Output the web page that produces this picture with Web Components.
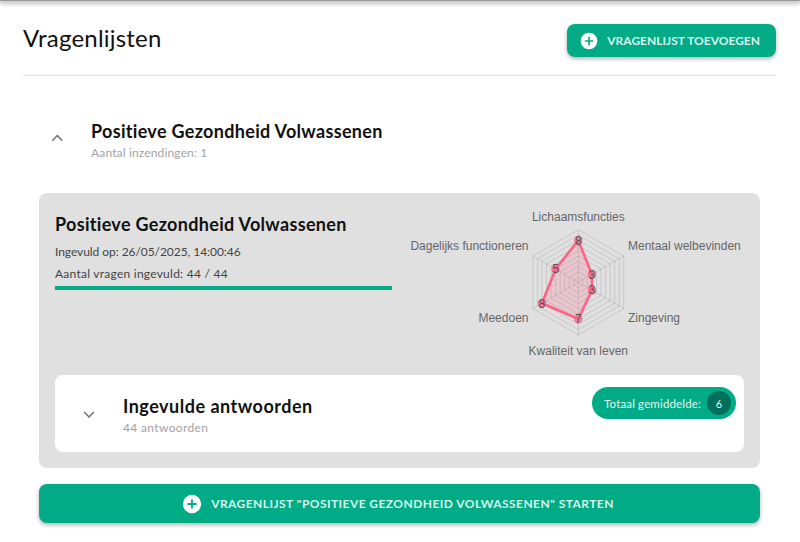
<!DOCTYPE html>
<html lang="nl"><head><meta charset="utf-8"><title>Vragenlijsten</title>
<style>
html,body{margin:0;padding:0;background:#fff;height:542px;overflow:hidden}
body{font-family:Lato,"Noto Sans",sans-serif;color:#000}
</style></head><body>
<template id="t-plus"><svg width="100%" height="100%" viewBox="0 0 24 24"><path fill="#fff" d="M12 2a10 10 0 1 0 0 20 10 10 0 0 0 0-20zm5 11h-4v4h-2v-4H7v-2h4V7h2v4h4v2z"/></svg></template>
<vl-app>
  <vl-header title-text="Vragenlijsten"><vl-button>VRAGENLIJST TOEVOEGEN</vl-button></vl-header>
  <vl-expander heading="Positieve Gezondheid Volwassenen" sub="Aantal inzendingen: 1" open></vl-expander>
  <vl-result heading="Positieve Gezondheid Volwassenen" date="Ingevuld op: 26/05/2025, 14:00:46" count="Aantal vragen ingevuld: 44 / 44">
    <vl-radar slot="chart"></vl-radar>
    <vl-answers slot="answers"></vl-answers>
  </vl-result>
  <vl-button block>VRAGENLIJST "POSITIEVE GEZONDHEID VOLWASSENEN" STARTEN</vl-button>
</vl-app>
<script>
const mk=(name,html,fn)=>customElements.define(name,class extends HTMLElement{
  connectedCallback(){ if(this.shadowRoot) return; const s=this.attachShadow({mode:'open'}); s.innerHTML=typeof html==='function'?html(this):html; fn&&fn(s,this);} });
const plus=()=>document.getElementById('t-plus').innerHTML;
const chev=d=>`<svg width="24" height="24" viewBox="0 0 24 24"><path fill="none" stroke="#6f6f6f" stroke-width="1.5" d="${d?'M7.1 9 12 14 16.9 9':'M7.3 14.7 12.3 9.5 17.3 14.7'}"/></svg>`;

mk('vl-app',`<style>:host{display:block;height:542px;box-sizing:border-box;position:relative}
.bar{height:1px;background:#999;box-shadow:0 1px 5px 1px rgba(0,0,0,.42)}
.wrap{padding:23px 24px 0 23px}</style><div class="bar"></div><div class="wrap"><slot></slot></div>`);

mk('vl-header',h=>`<style>:host{display:flex;justify-content:space-between;align-items:flex-start;height:51px;border-bottom:1px solid #e0e0e0;margin-bottom:0}
h1{margin:0;font-weight:400;font-size:24px;line-height:28px;color:#111;letter-spacing:.2px}</style>
<h1>${h.getAttribute('title-text')}</h1><slot></slot>`);

mk('vl-button',h=>{const b=h.hasAttribute('block');return `<style>:host{display:${b?'flex':'inline-flex'};align-items:center;justify-content:center;gap:8px;box-sizing:border-box;
height:${b?39:33}px;padding:${b?'0 18px 0 14px':'0 16px 0 12px'};background:#00ab86;color:#d9f5ee;border-radius:8px;font-size:12px;font-weight:700;letter-spacing:${b?'.44px':'0'};white-space:nowrap;
box-shadow:0 2px 4px rgba(0,0,0,.3)}
${b?':host{margin-left:16px;margin-right:16px}':''}
.i{width:${b?22:20}px;height:${b?22:20}px;display:block}</style><span class="i">${plus()}</span><span><slot></slot></span>`});

mk('vl-expander',h=>`<style>:host{display:flex;align-items:flex-start;height:117px;box-sizing:border-box;padding:44px 0 0 22px}
.c{width:24px;height:24px;margin-top:6px;margin-right:22px}
h2{margin:0;font-size:18px;line-height:22px;font-weight:700;color:#111;letter-spacing:.31px}
p{margin:3px 0 0;font-size:12px;line-height:16px;color:#a3a3a3;letter-spacing:.15px}</style>
<span class="c">${chev(false)}</span><div><h2>${h.getAttribute('heading')}</h2><p>${h.getAttribute('sub')}</p></div>`);

mk('vl-result',h=>`<style>:host{display:block;box-sizing:border-box;margin:0 16px 16px;background:#e0e0e0;border-radius:8px;padding:16px;height:275px}
.top{display:grid;grid-template-columns:337px 1fr;gap:15px;height:166px}
h3{margin:4px 0 0;font-size:18px;line-height:22px;font-weight:700;color:#111;letter-spacing:.31px}
p{margin:0;font-size:12px;line-height:16px;color:#444}
.d{margin-top:9px;letter-spacing:-.06px}.n{margin-top:6px;letter-spacing:.25px}
.bar{height:4px;background:#00ab86;margin-top:4px}
.chart{margin-top:-12px}</style>
<div class="top"><div><h3>${h.getAttribute('heading')}</h3><p class="d">${h.getAttribute('date')}</p><p class="n">${h.getAttribute('count')}</p><div class="bar"></div></div>
<div class="chart"><slot name="chart"></slot></div></div><slot name="answers"></slot>`);

mk('vl-radar',()=>{
  const cx=171.3,cy=85.3,u=5.25,vals=[8,3,3,7,8,5];
  const pt=(i,v)=>{const a=(i*60-90)*Math.PI/180;return [cx+Math.cos(a)*v*u,cy+Math.sin(a)*v*u]};
  const poly=v=>[0,1,2,3,4,5].map(i=>pt(i,v).map(n=>n.toFixed(2)).join(',')).join(' ');
  let g='';
  for(let v=1;v<=10;v++) g+=`<polygon points="${poly(v)}" fill="none" stroke="#000" stroke-opacity=".11"/>`;
  for(let i=0;i<6;i++){const p=pt(i,10);g+=`<line x1="${cx}" y1="${cy}" x2="${p[0]}" y2="${p[1]}" stroke="#000" stroke-opacity=".11"/>`}
  const d=vals.map((v,i)=>pt(i,v).map(n=>n.toFixed(2)).join(',')).join(' ');
  const labs=[['Lichaamsfuncties',171.3,24,'middle'],['Mentaal welbevinden',221,53,'start'],['Zingeving',221,125,'start'],['Kwaliteit van leven',171.3,158,'middle'],['Meedoen',121.5,125,'end'],['Dagelijks functioneren',121.5,53,'end']];
  return `<style>:host{display:block}svg{display:block;overflow:visible;font-family:"Liberation Sans",Arial,sans-serif;font-size:12px}</style>
  <svg width="337" height="178" viewBox="0 0 337 178">${g}
  <polygon points="${d}" fill="#ff6384" fill-opacity=".2" stroke="#ff6384" stroke-width="2.6" stroke-linejoin="round"/>
  ${vals.map((v,i)=>{const p=pt(i,v);return `<circle cx="${p[0]}" cy="${p[1]}" r="3.5" fill="#ff6384" fill-opacity=".6" stroke="#ff6384" stroke-width="1.3"/><text x="${p[0]}" y="${p[1]+4.3}" text-anchor="middle" fill="#555">${v}</text>`}).join('')}
  ${labs.map(l=>`<text x="${l[1]}" y="${l[2]}" text-anchor="${l[3]}" fill="#666">${l[0]}</text>`).join('')}</svg>`;
});

mk('vl-answers',`<style>:host{display:flex;justify-content:space-between;align-items:flex-start;height:77px;box-sizing:border-box;background:#fff;border-radius:8px;padding:12px 8px 0 22px;margin-top:0}
.l{display:flex}.c{width:24px;height:24px;margin:16px 22px 0 0}
h4{margin:8px 0 0;font-size:18px;line-height:22px;font-weight:700;color:#111;letter-spacing:.5px}
p{margin:3px 0 0;font-size:12px;line-height:16px;color:#a3a3a3;letter-spacing:.35px}</style>
<div class="l"><span class="c">${chev(true)}</span><div><h4>Ingevulde antwoorden</h4><p>44 antwoorden</p></div></div><vl-pill>Totaal gemiddelde:</vl-pill>`);

mk('vl-pill',`<style>:host{display:inline-flex;align-items:center;box-sizing:border-box;height:32px;padding:0 5px 0 12px;border-radius:16px;background:#00ab86;color:#e3f8f2;font-size:11.5px;font-weight:400;gap:6px;white-space:nowrap;letter-spacing:.15px}
b{display:flex;align-items:center;justify-content:center;width:24px;height:24px;border-radius:50%;background:#00705a;font-weight:400;font-size:11px}</style><span><slot></slot></span><b>6</b>`);
</script>
</body></html>
